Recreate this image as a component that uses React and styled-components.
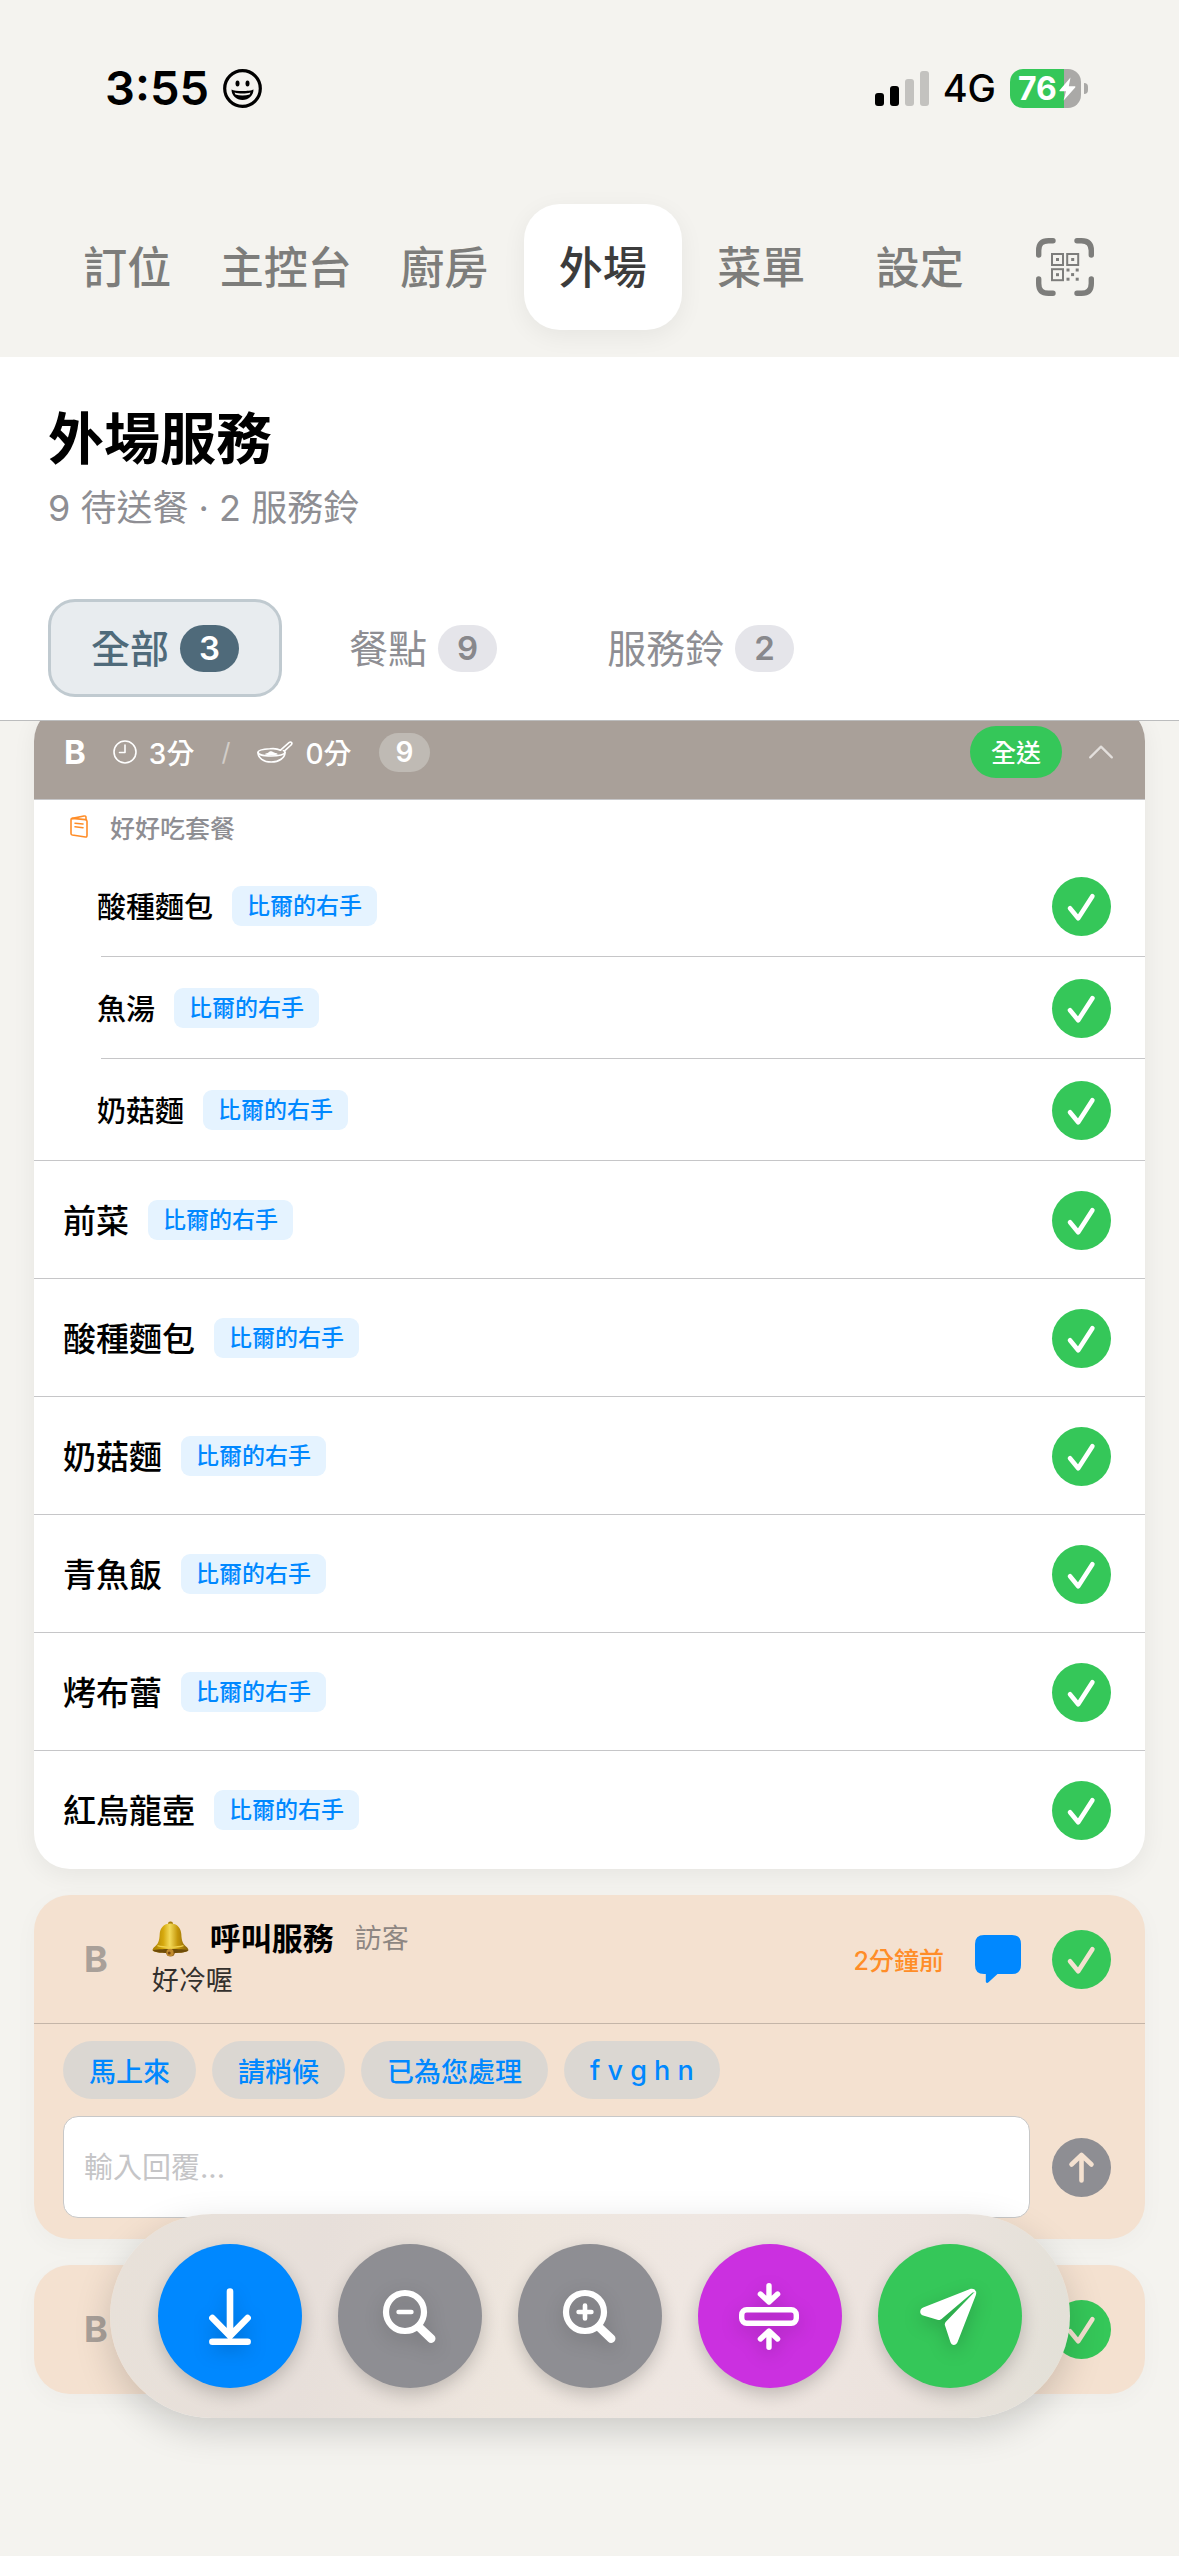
import { useState } from "react";
import styled, { createGlobalStyle } from "styled-components";

const GlobalStyle = createGlobalStyle`
	:root {
		--bgColor: #f4f3ef;
		--green: #35c759;
		--blue: #0088ff;
		--orange: #ff8d28;
		--gray: #8e8e93;
		--taupe: #a9a099;
		--slate: #4f6a7a;
		--peach: #f4e1d0;
		--line: #c6c6c8;
	}
	*, *::before, *::after {
		box-sizing: border-box;
	}
	body {
		margin: 0;
		background: var(--bgColor);
		color: #000;
		font-family: Inter, "Noto Sans CJK TC", sans-serif;
	}
	button, input {
		font-family: inherit;
	}
	button {
		border: none;
		padding: 0;
		background: none;
		color: inherit;
		cursor: pointer;
	}
	h1, p, ul {
		margin: 0;
		padding: 0;
	}
	ul {
		list-style: none;
	}
	svg {
		display: block;
		flex-shrink: 0;
	}
`;

const Page = styled.div`
	min-height: 100vh;
	display: flex;
	flex-direction: column;
`;

/* status bar */

const StatusBar = styled.div`
	height: 176px;
	padding: 0 98px 0 105px;
	display: flex;
	align-items: center;
	justify-content: space-between;
`;

const StatusGroup = styled.div`
	display: flex;
	align-items: center;
	gap: 14px;
`;

const Clock = styled.time`
	font-size: 47px;
	line-height: 58px;
	font-weight: 600;
`;

const Network = styled.span`
	font-size: 38px;
	line-height: 46px;
	font-weight: 500;
`;

const Battery = styled.div`
	width: 71px;
	height: 39px;
	position: relative;
	display: flex;
	align-items: center;
	padding-left: 8px;
	border-radius: 13px;
	background: linear-gradient(90deg, var(--green) 76%, #aaa9a7 76%);
	color: #fff;
	font-size: 32px;
	line-height: 39px;
	font-weight: 700;
	svg {
		position: absolute;
		right: 5px;
		top: 8px;
	}
	&::after {
		content: "";
		position: absolute;
		right: -7px;
		top: 14px;
		width: 4px;
		height: 11px;
		border-radius: 0 4px 4px 0;
		background: #aaa9a7;
	}
`;

/* top navigation */

const Nav = styled.nav`
	height: 181px;
	padding: 28px 48px 27px;
	display: flex;
`;

const NavTabs = styled.div`
	flex: 1;
	display: flex;
`;

const NavTab = styled.button`
	flex: 1;
	padding-bottom: 4px;
	border-radius: 36px;
	font-size: 44px;
	font-weight: 500;
	white-space: nowrap;
	color: ${({ $active }) => ($active ? "#3c3c3c" : "#7d7d7b")};
	background: ${({ $active }) => ($active ? "#fff" : "transparent")};
	box-shadow: ${({ $active }) =>
		$active ? "0 6px 24px rgba(0, 0, 0, 0.06)" : "none"};
`;

const ScanButton = styled.button`
	width: 132px;
	display: flex;
	align-items: center;
	justify-content: center;
	color: #7d7d7b;
`;

/* page heading and filters */

const Heading = styled.header`
	padding: 48px 48px 23px;
	position: relative;
	z-index: 1;
	background: #fff;
	border-bottom: 1px solid #bcbdbe;
`;

const Title = styled.h1`
	font-size: 56px;
	line-height: 68px;
	font-weight: 700;
`;

const Subtitle = styled.p`
	margin-top: 12px;
	font-size: 36px;
	line-height: 46px;
	color: var(--gray);
`;

const Filters = styled.div`
	margin-top: 68px;
	display: flex;
	gap: 24px;
`;

const Filter = styled.button`
	height: 98px;
	padding: 0 40px;
	display: flex;
	align-items: center;
	gap: 11px;
	border: 3px solid ${({ $active }) => ($active ? "#c0cad0" : "transparent")};
	border-radius: 27px;
	background: ${({ $active }) => ($active ? "#e8ecef" : "transparent")};
	color: ${({ $active }) => ($active ? "var(--slate)" : "var(--gray)")};
`;

const FilterLabel = styled.span`
	padding-bottom: 4px;
	font-size: 39px;
	font-weight: ${({ $active }) => ($active ? 500 : 400)};
`;

const FilterCount = styled.span`
	padding: 0 19px;
	border-radius: 24px;
	background: ${({ $active }) => ($active ? "var(--slate)" : "#e5e5ea")};
	color: ${({ $active }) => ($active ? "#fff" : "#88888c")};
	font-size: 33px;
	line-height: 47px;
	font-weight: 600;
`;

/* list */

const List = styled.main`
	flex: 1;
	padding: 0 34px 120px;
	overflow: hidden;
`;

const OrderCard = styled.section`
	margin-top: -16px;
	border-radius: 36px;
	background: #fff;
	box-shadow: 0 6px 24px rgba(0, 0, 0, 0.06);
	overflow: hidden;
`;

const OrderHeader = styled.div`
	height: 95px;
	padding: 0 32px 0 30px;
	display: flex;
	align-items: center;
	gap: 27px;
	background: var(--taupe);
	border-bottom: 1px solid var(--line);
	color: #fff;
`;

const Table = styled.span`
	font-size: ${({ $large }) => ($large ? "36px" : "33px")};
	font-weight: 700;
	color: ${({ $large }) => ($large ? "var(--taupe)" : "#fff")};
`;

const Elapsed = styled.span`
	display: flex;
	align-items: center;
	gap: 12px;
	font-size: 28px;
	font-weight: 500;
`;

const Slash = styled.span`
	font-size: 25px;
	color: #d2cdc8;
`;

const CountBadge = styled.span`
	padding: 0 17px;
	border-radius: 20px;
	background: #bfbab4;
	font-size: 28px;
	line-height: 39px;
	font-weight: 600;
`;

const ServeAll = styled.button`
	height: 52px;
	margin-left: auto;
	padding: 0 21px 2px;
	border-radius: 26px;
	background: var(--green);
	color: #fff;
	font-size: 25px;
	font-weight: 500;
`;

const Collapse = styled.button`
	color: #e3dfdc;
`;

const SetTitle = styled.div`
	height: 55px;
	padding: 0 36px 2px;
	display: flex;
	align-items: center;
	gap: 22px;
	color: var(--gray);
	font-size: 25px;
	font-weight: 500;
`;

const Item = styled.li`
	height: ${({ $nested }) => ($nested ? "102px" : "118px")};
	padding: 0 34px 0 ${({ $nested }) => ($nested ? "63px" : "29px")};
	display: flex;
	align-items: center;
	gap: 19px;
	font-size: ${({ $nested }) => ($nested ? "29px" : "33px")};
	font-weight: 500;
	button {
		margin-left: auto;
	}
	/* hairline, indented between the dishes of one set */
	background: linear-gradient(var(--line), var(--line)) no-repeat
		${({ $inset }) => ($inset ? "67px" : "0")} 100% / 100%
		${({ $last }) => ($last ? "0" : "1px")};
`;

const DishName = styled.span`
	padding-bottom: 2px;
`;

const Tag = styled.span`
	padding: 0 15px;
	border-radius: 9px;
	background: #e5f3ff;
	color: var(--blue);
	font-size: 23px;
	line-height: 40px;
	font-weight: 500;
`;

const RoundButton = styled.button`
	width: 59px;
	height: 59px;
	flex-shrink: 0;
	border-radius: 50%;
	background: ${({ $color }) => $color || "var(--green)"};
	color: ${({ $ink }) => $ink || "#fff"};
`;

/* service bell */

const ServiceCard = styled.section`
	margin-top: 26px;
	border-radius: 36px;
	background: var(--peach);
	box-shadow: 0 6px 24px rgba(0, 0, 0, 0.03);
`;

const ServiceRow = styled.div`
	height: 129px;
	padding: 0 34px 0 50px;
	display: flex;
	align-items: center;
	border-bottom: 1px solid ${({ $open }) => ($open ? "#c4b5a8" : "transparent")};
`;

const ServiceBody = styled.div`
	flex: 1;
	margin-left: 44px;
`;

const ServiceTitle = styled.div`
	display: flex;
	align-items: center;
	gap: 21px;
	font-size: 31px;
	line-height: 44px;
	font-weight: 600;
	span {
		font-size: 27px;
		font-weight: 400;
		color: #8d8682;
	}
`;

const ServiceNote = styled.p`
	font-size: 27px;
	line-height: 40px;
	color: #33302d;
`;

const ServiceActions = styled.div`
	display: flex;
	align-items: center;
	gap: 31px;
	color: var(--orange);
	font-size: 25px;
	font-weight: 500;
`;

const Reply = styled.form`
	padding: 17px 34px 21px 29px;
`;

const Chips = styled.div`
	display: flex;
	gap: 16px;
`;

const Chip = styled.button`
	height: 58px;
	padding: 0 26px;
	border-radius: 29px;
	background: #dbd7d2;
	color: var(--blue);
	font-size: 27px;
	font-weight: 500;
`;

const ReplyRow = styled.div`
	margin-top: 17px;
	display: flex;
	align-items: center;
	gap: 22px;
`;

const ReplyInput = styled.input`
	flex: 1;
	min-width: 0;
	height: 102px;
	padding: 0 20px;
	border: 1px solid #c8c8c8;
	border-radius: 15px;
	background: #fff;
	font-size: 29px;
	outline: none;
	&::placeholder {
		color: #c5c5c7;
		opacity: 1;
	}
`;

/* floating tools */

const Toolbar = styled.div`
	position: fixed;
	left: 50%;
	bottom: 138px;
	z-index: 2;
	transform: translateX(-50%);
	padding: 30px 48px;
	display: flex;
	gap: 36px;
	border-radius: 102px;
	background: linear-gradient(
		100deg,
		#e8e1d9 0%,
		#e7dfda 22%,
		#eee6de 42%,
		#efe7e2 60%,
		#ece3de 82%,
		#e2e0d7 100%
	);
	box-shadow: 0 12px 36px rgba(0, 0, 0, 0.17);
`;

const Tool = styled.button`
	width: 144px;
	height: 144px;
	border-radius: 50%;
	background: ${({ $color }) => $color};
	color: #fff;
	box-shadow: 0 6px 18px rgba(0, 0, 0, 0.2);
	svg {
		filter: drop-shadow(0 6px 9px rgba(0, 0, 0, 0.18));
	}
`;

/* icons */

const stroke = {
	fill: "none",
	stroke: "currentColor",
	strokeLinecap: "round",
	strokeLinejoin: "round",
};

const SmileIcon = () => (
	<svg width="39" height="39" viewBox="0 0 39 39">
		<circle cx="19.5" cy="19.5" r="17.8" fill="none" stroke="#000" strokeWidth="3.2" />
		<ellipse cx="14.5" cy="14.5" rx="2" ry="3" />
		<ellipse cx="24.5" cy="14.5" rx="2" ry="3" />
		<path d="M8.5 20.5C12 22.5 27 22.5 30.5 20.5C30.5 26.5 25.5 31 19.5 31S8.5 26.5 8.5 20.5Z" />
		<path d="M11.5 23.4C16 24.8 23 24.8 27.5 23.4L26.6 25.4C22 26.8 17 26.8 12.4 25.4Z" fill="#f4f3ef" />
	</svg>
);

const SignalIcon = () => (
	<svg width="54" height="35" viewBox="0 0 54 35">
		<rect x="0" y="22" width="9" height="13" rx="3" />
		<rect x="15" y="15" width="9" height="20" rx="3" />
		<rect x="30" y="8" width="9" height="27" rx="3" fill="#c3c2bf" />
		<rect x="45" y="0" width="9" height="35" rx="3" fill="#c3c2bf" />
	</svg>
);

const BoltIcon = () => (
	<svg width="17" height="24" viewBox="0 0 17 24">
		<path d="M11.5 0.5L0.6 13.2C0.2 13.8 0.5 14.3 1.2 14.3H7L4.6 23.4L16.2 10.4C16.6 9.8 16.3 9.3 15.6 9.3H9.8Z" fill="#fff" />
	</svg>
);

const ScanIcon = () => (
	<svg width="58" height="58" viewBox="0 0 58 58">
		<g {...stroke} strokeWidth="5.4">
			<path d="M2.7 17V12.5Q2.7 2.7 12.5 2.7H17" />
			<path d="M41 2.7H45.5Q55.3 2.7 55.3 12.5V17" />
			<path d="M55.3 41V45.5Q55.3 55.3 45.5 55.3H41" />
			<path d="M17 55.3H12.5Q2.7 55.3 2.7 45.5V41" />
		</g>
		<g fill="none" stroke="currentColor" strokeWidth="2">
			<rect x="16" y="16" width="11" height="11" />
			<rect x="31.2" y="16" width="11" height="11" />
			<rect x="16" y="31.2" width="11" height="11" />
		</g>
		<g fill="currentColor">
			<rect x="20" y="20" width="3" height="3" />
			<rect x="35.2" y="20" width="3" height="3" />
			<rect x="20" y="35.2" width="3" height="3" />
			<rect x="30.5" y="30.5" width="3" height="3" />
			<rect x="39.7" y="30.5" width="3" height="3" />
			<rect x="35.1" y="35.1" width="3" height="3" />
			<rect x="30.5" y="39.7" width="3" height="3" />
			<rect x="39.7" y="39.7" width="3" height="3" />
		</g>
	</svg>
);

const ClockIcon = () => (
	<svg width="24" height="24" viewBox="0 0 24 24">
		<g {...stroke} strokeWidth="1.6">
			<circle cx="12" cy="12" r="11" />
			<path d="M12 5V12.5H6.5" />
		</g>
	</svg>
);

const PanIcon = () => (
	<svg width="36" height="22" viewBox="0 0 36 22">
		<g {...stroke} strokeWidth="1.6">
			<path d="M23.5 9.2C20.5 7.6 16 7.4 12.8 7.8C6 8.2 1 9.4 1 11.2C1 13.4 6.8 15 14.3 15S28 13.4 28 11.2C28 10.6 27.4 10.1 26.4 9.6" />
			<path d="M1 11.2C1 17 6.5 21 14.3 21S28 17 28 11.2" />
			<path d="M23.5 9.2L32 1.7C33.2 0.7 34.4 1 34.8 1.9C35.1 2.7 34.8 3.4 34 4L27.6 9.8" />
		</g>
		<path d="M7.8 13.2C9 12 10.4 12.4 11.4 11.6C12.6 10.2 14.8 9.8 16 11C17.2 12.2 19.6 11.6 21 13.2C18 14.6 11 14.6 7.8 13.2Z" fill="currentColor" />
	</svg>
);

const MenuIcon = () => (
	<svg width="18" height="23" viewBox="0 0 18 23">
		<g {...stroke} stroke="#ff8d28" strokeWidth="1.6">
			<path d="M2.4 3.4L15.4 4.6C16.4 4.7 17 5.3 17 6.2V20.6C17 21.7 16.4 22.2 15.4 22L2.3 20C1.4 19.8 1 19.3 1 18.4V4.8C1 3.9 1.5 3.4 2.4 3.4Z" />
			<path d="M2.4 3.4L14 1C15.2 0.8 16 1.3 16 2.4V4.8" />
			<path d="M5 8.2L13 9M5 11.8L13 12.7" />
		</g>
	</svg>
);

const ChevronIcon = () => (
	<svg width="24" height="14" viewBox="0 0 24 14">
		<path {...stroke} strokeWidth="2.2" d="M1.2 12.4L12 1.6L22.8 12.4" />
	</svg>
);

const CheckIcon = () => (
	<svg width="59" height="59" viewBox="0 0 59 59">
		<path {...stroke} strokeWidth="4.6" d="M18 31.2L26.2 41.2L40.4 19.2" />
	</svg>
);

const SendUpIcon = () => (
	<svg width="59" height="59" viewBox="0 0 59 59">
		<path {...stroke} strokeWidth="4.6" d="M29.5 42.5V17.5M19.5 26.5L29.5 17L39.5 26.5" />
	</svg>
);

const BellIcon = () => (
	<svg width="37" height="36" viewBox="0 0 37 36">
		<defs>
			<linearGradient id="bellBody" x1="0" x2="1" y1="0" y2="0">
				<stop offset="0" stopColor="#a67c00" />
				<stop offset="0.3" stopColor="#d6a90e" />
				<stop offset="0.48" stopColor="#f3da5a" />
				<stop offset="0.7" stopColor="#c4960a" />
				<stop offset="1" stopColor="#85610a" />
			</linearGradient>
		</defs>
		<rect x="16" y="0.5" width="5" height="5" rx="2.2" fill="#a87d08" />
		<circle cx="18.5" cy="31" r="4.6" fill="#96651a" />
		<path
			d="M18.5 2.5C25.5 2.5 29 7.5 29.3 13C29.6 19.5 30.5 22.5 34 25.5C35.8 27 36.8 28.5 36.3 29.6C34 31.6 26 32 18.5 32S3 31.6 0.7 29.6C0.2 28.5 1.2 27 3 25.5C6.5 22.5 7.4 19.5 7.7 13C8 7.5 11.5 2.5 18.5 2.5Z"
			fill="url(#bellBody)"
		/>
		<path d="M0.7 29.4C6 27.6 31 27.6 36.3 29.4C34 31.6 26 32 18.5 32S3 31.6 0.7 29.4Z" fill="#6f4c08" />
		<path d="M5.5 24.6C12 26.6 25 26.6 31.5 24.6" fill="none" stroke="#f0d04c" strokeWidth="1.2" />
		<circle cx="18" cy="31.4" r="3.6" fill="#c08a2c" />
		<circle cx="17.2" cy="32" r="1.5" fill="#7a4a12" />
	</svg>
);

const BubbleIcon = () => (
	<svg width="46" height="48" viewBox="0 0 46 48">
		<path
			d="M9 0H37Q46 0 46 9V30Q46 39 37 39H22.5L13.5 47.3C12.2 48.5 10.8 48 10.8 46.3V39H9Q0 39 0 30V9Q0 0 9 0Z"
			fill="#0088ff"
		/>
	</svg>
);

const DownIcon = () => (
	<svg width="144" height="144" viewBox="0 0 144 144">
		<path {...stroke} strokeWidth="6.6" d="M72 47.5V91M54.4 74L72 92L89.6 74M54.4 97.8H89.6" />
	</svg>
);

const ZoomIcon = ({ plus }) => (
	<svg width="144" height="144" viewBox="0 0 144 144">
		<g {...stroke}>
			<circle cx="67" cy="68" r="19" strokeWidth="6.2" />
			<path strokeWidth="8.6" d="M81.5 83.5L93.2 94.6" />
			<path strokeWidth="4.6" d={plus ? "M60.6 68H73.4M67 61.6V74.4" : "M60.6 68H73.4"} />
		</g>
	</svg>
);

const CompressIcon = () => (
	<svg width="144" height="144" viewBox="0 0 144 144">
		<g {...stroke} strokeWidth="5.4">
			<rect x="43.7" y="65.7" width="54.6" height="13.6" rx="5" />
			<path d="M71 41.8V57M62.4 50L71 58L79.6 50" />
			<path d="M71 103.2V88M62.4 95L71 87L79.6 95" />
		</g>
	</svg>
);

const PlaneIcon = () => (
	<svg width="144" height="144" viewBox="0 0 144 144">
		<g fill="#fff">
			<path d="M91.5 45.2C95 44.2 97.6 45.4 97.9 48.2L94.6 48.4L64.4 74.2C62.8 75.8 61.4 76.3 59.4 75.8L45.2 71.6C41.2 70.2 41.2 65.2 45.2 63.4Z" />
			<path d="M98 47C98.4 48.6 98.2 50 97.7 51.6L79.6 98C78 102 73.6 102 72.4 98L67 81.6C66.5 80 66.8 79 67.9 77.8L95.6 49Z" />
		</g>
	</svg>
);

/* data */

const NAV_TABS = ["訂位", "主控台", "廚房", "外場", "菜單", "設定"];

const FILTERS = [
	{ label: "全部", count: 3 },
	{ label: "餐點", count: 9 },
	{ label: "服務鈴", count: 2 },
];

const SERVER = "比爾的右手";
const SET_ITEMS = ["酸種麵包", "魚湯", "奶菇麵"];
const ITEMS = ["前菜", "酸種麵包", "奶菇麵", "青魚飯", "烤布蕾", "紅烏龍壺"];
const REPLIES = ["馬上來", "請稍候", "已為您處理", "f v g h n"];

const Dish = ({ name, ...rest }) => (
	<Item {...rest}>
		<DishName>{name}</DishName>
		<Tag>{SERVER}</Tag>
		<RoundButton type="button" aria-label="送餐">
			<CheckIcon />
		</RoundButton>
	</Item>
);

const App = () => {
	const [tab, setTab] = useState("外場");
	const [filter, setFilter] = useState("全部");
	const [reply, setReply] = useState("");

	return (
		<Page>
			<GlobalStyle />
			<StatusBar>
				<StatusGroup>
					<Clock>3:55</Clock>
					<SmileIcon />
				</StatusGroup>
				<StatusGroup>
					<SignalIcon />
					<Network>4G</Network>
					<Battery>
						76
						<BoltIcon />
					</Battery>
				</StatusGroup>
			</StatusBar>

			<Nav>
				<NavTabs>
					{NAV_TABS.map((name) => (
						<NavTab key={name} type="button" $active={name === tab} onClick={() => setTab(name)}>
							{name}
						</NavTab>
					))}
				</NavTabs>
				<ScanButton type="button" aria-label="掃描">
					<ScanIcon />
				</ScanButton>
			</Nav>

			<Heading>
				<Title>外場服務</Title>
				<Subtitle>9 待送餐 · 2 服務鈴</Subtitle>
				<Filters>
					{FILTERS.map(({ label, count }) => {
						const active = label === filter;
						return (
							<Filter key={label} type="button" $active={active} onClick={() => setFilter(label)}>
								<FilterLabel $active={active}>{label}</FilterLabel>
								<FilterCount $active={active}>{count}</FilterCount>
							</Filter>
						);
					})}
				</Filters>
			</Heading>

			<List>
				<OrderCard>
					<OrderHeader>
						<Table>B</Table>
						<Elapsed>
							<ClockIcon />
							3分
						</Elapsed>
						<Slash>/</Slash>
						<Elapsed>
							<PanIcon />
							0分
						</Elapsed>
						<CountBadge>9</CountBadge>
						<ServeAll type="button">全送</ServeAll>
						<Collapse type="button" aria-label="收合">
							<ChevronIcon />
						</Collapse>
					</OrderHeader>
					<SetTitle>
						<MenuIcon />
						好好吃套餐
					</SetTitle>
					<ul>
						{SET_ITEMS.map((name, i) => (
							<Dish key={name} name={name} $nested $inset={i < SET_ITEMS.length - 1} />
						))}
						{ITEMS.map((name, i) => (
							<Dish key={name} name={name} $last={i === ITEMS.length - 1} />
						))}
					</ul>
				</OrderCard>

				<ServiceCard>
					<ServiceRow $open>
						<Table $large>B</Table>
						<ServiceBody>
							<ServiceTitle>
								<BellIcon />
								呼叫服務
								<span>訪客</span>
							</ServiceTitle>
							<ServiceNote>好冷喔</ServiceNote>
						</ServiceBody>
						<ServiceActions>
							2分鐘前
							<button type="button" aria-label="回覆">
								<BubbleIcon />
							</button>
							<RoundButton type="button" aria-label="完成" $ink="var(--peach)">
								<CheckIcon />
							</RoundButton>
						</ServiceActions>
					</ServiceRow>
					<Reply onSubmit={(e) => e.preventDefault()}>
						<Chips>
							{REPLIES.map((text) => (
								<Chip key={text} type="button" onClick={() => setReply(text)}>
									{text}
								</Chip>
							))}
						</Chips>
						<ReplyRow>
							<ReplyInput
								aria-label="輸入回覆"
								placeholder="輸入回覆..."
								value={reply}
								onChange={(e) => setReply(e.target.value)}
							/>
							<RoundButton type="submit" aria-label="送出" $color="var(--gray)" $ink="var(--peach)">
								<SendUpIcon />
							</RoundButton>
						</ReplyRow>
					</Reply>
				</ServiceCard>

				<ServiceCard>
					<ServiceRow>
						<Table $large>B</Table>
						<ServiceBody />
						<RoundButton type="button" aria-label="完成" $ink="var(--peach)">
							<CheckIcon />
						</RoundButton>
					</ServiceRow>
				</ServiceCard>
			</List>

			<Toolbar>
				<Tool type="button" aria-label="捲到底部" $color="var(--blue)">
					<DownIcon />
				</Tool>
				<Tool type="button" aria-label="縮小" $color="var(--gray)">
					<ZoomIcon />
				</Tool>
				<Tool type="button" aria-label="放大" $color="var(--gray)">
					<ZoomIcon plus />
				</Tool>
				<Tool type="button" aria-label="收合全部" $color="#cb30e0">
					<CompressIcon />
				</Tool>
				<Tool type="button" aria-label="送出" $color="var(--green)">
					<PlaneIcon />
				</Tool>
			</Toolbar>
		</Page>
	);
};

export default App;
